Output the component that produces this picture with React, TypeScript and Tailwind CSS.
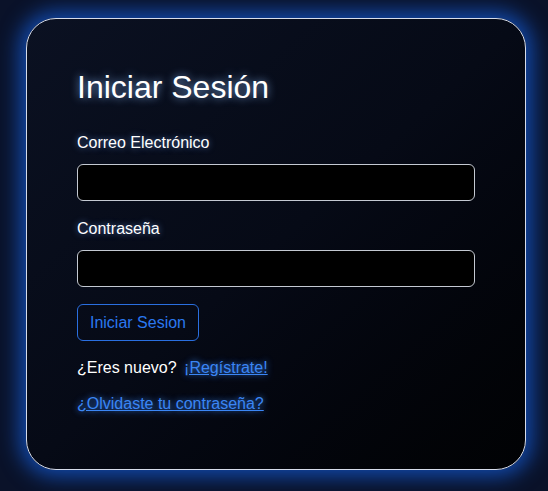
import React from 'react';

const font = { fontFamily: '"Liberation Sans", Arial, sans-serif' };

function Field({ label, type }: { label: string; type: string }) {
  return (
    <div className="flex flex-col">
      <label className="text-[16px] leading-[18px] text-white [text-shadow:0_0_6px_rgba(120,170,255,0.6)] mb-[12px]">
        {label}
      </label>
      <input
        type={type}
        className="h-[37px] w-full rounded-[6px] border border-[#c4c9d2] bg-black px-3 text-white outline-none"
      />
    </div>
  );
}

export default function App() {
  return (
    <div className="min-h-[491px] w-[548px] bg-[#0a1229] pt-[18px] pl-[26px]" style={font}>
      <div className="w-[500px] h-[452px] rounded-[30px] border border-[#d6dcea] bg-gradient-to-br from-[#0b1122] via-[#060a16] to-[#010204] px-[50px] pt-[50px] shadow-[0_0_20px_7px_rgba(20,90,210,0.75)]">
        <h1 className="text-[32px] leading-[37px] text-white [text-shadow:0_0_8px_rgba(140,190,255,0.8)]">
          Iniciar Sesión
        </h1>

        <div className="mt-[28px] flex flex-col gap-[19px]">
          <Field label="Correo Electrónico" type="email" />
          <Field label="Contraseña" type="password" />
        </div>

        <button className="mt-[17px] h-[37px] w-[122px] rounded-[6px] border border-[#2a6fe0] bg-transparent text-[16px] text-[#2a78f0]">
          Iniciar Sesion
        </button>

        <p className="mt-[18px] text-[16px] leading-[18px] text-white">
          ¿Eres nuevo?{' '}
          <a
            href="#"
            className="ml-[3px] text-[#3b86f5] underline [text-shadow:0_0_6px_rgba(60,140,255,0.9)]"
          >
            ¡Regístrate!
          </a>
        </p>

        <p className="mt-[18px] text-[16px] leading-[18px]">
          <a
            href="#"
            className="text-[#3b86f5] underline [text-shadow:0_0_6px_rgba(60,140,255,0.9)]"
          >
            ¿Olvidaste tu contraseña?
          </a>
        </p>
      </div>
    </div>
  );
}
